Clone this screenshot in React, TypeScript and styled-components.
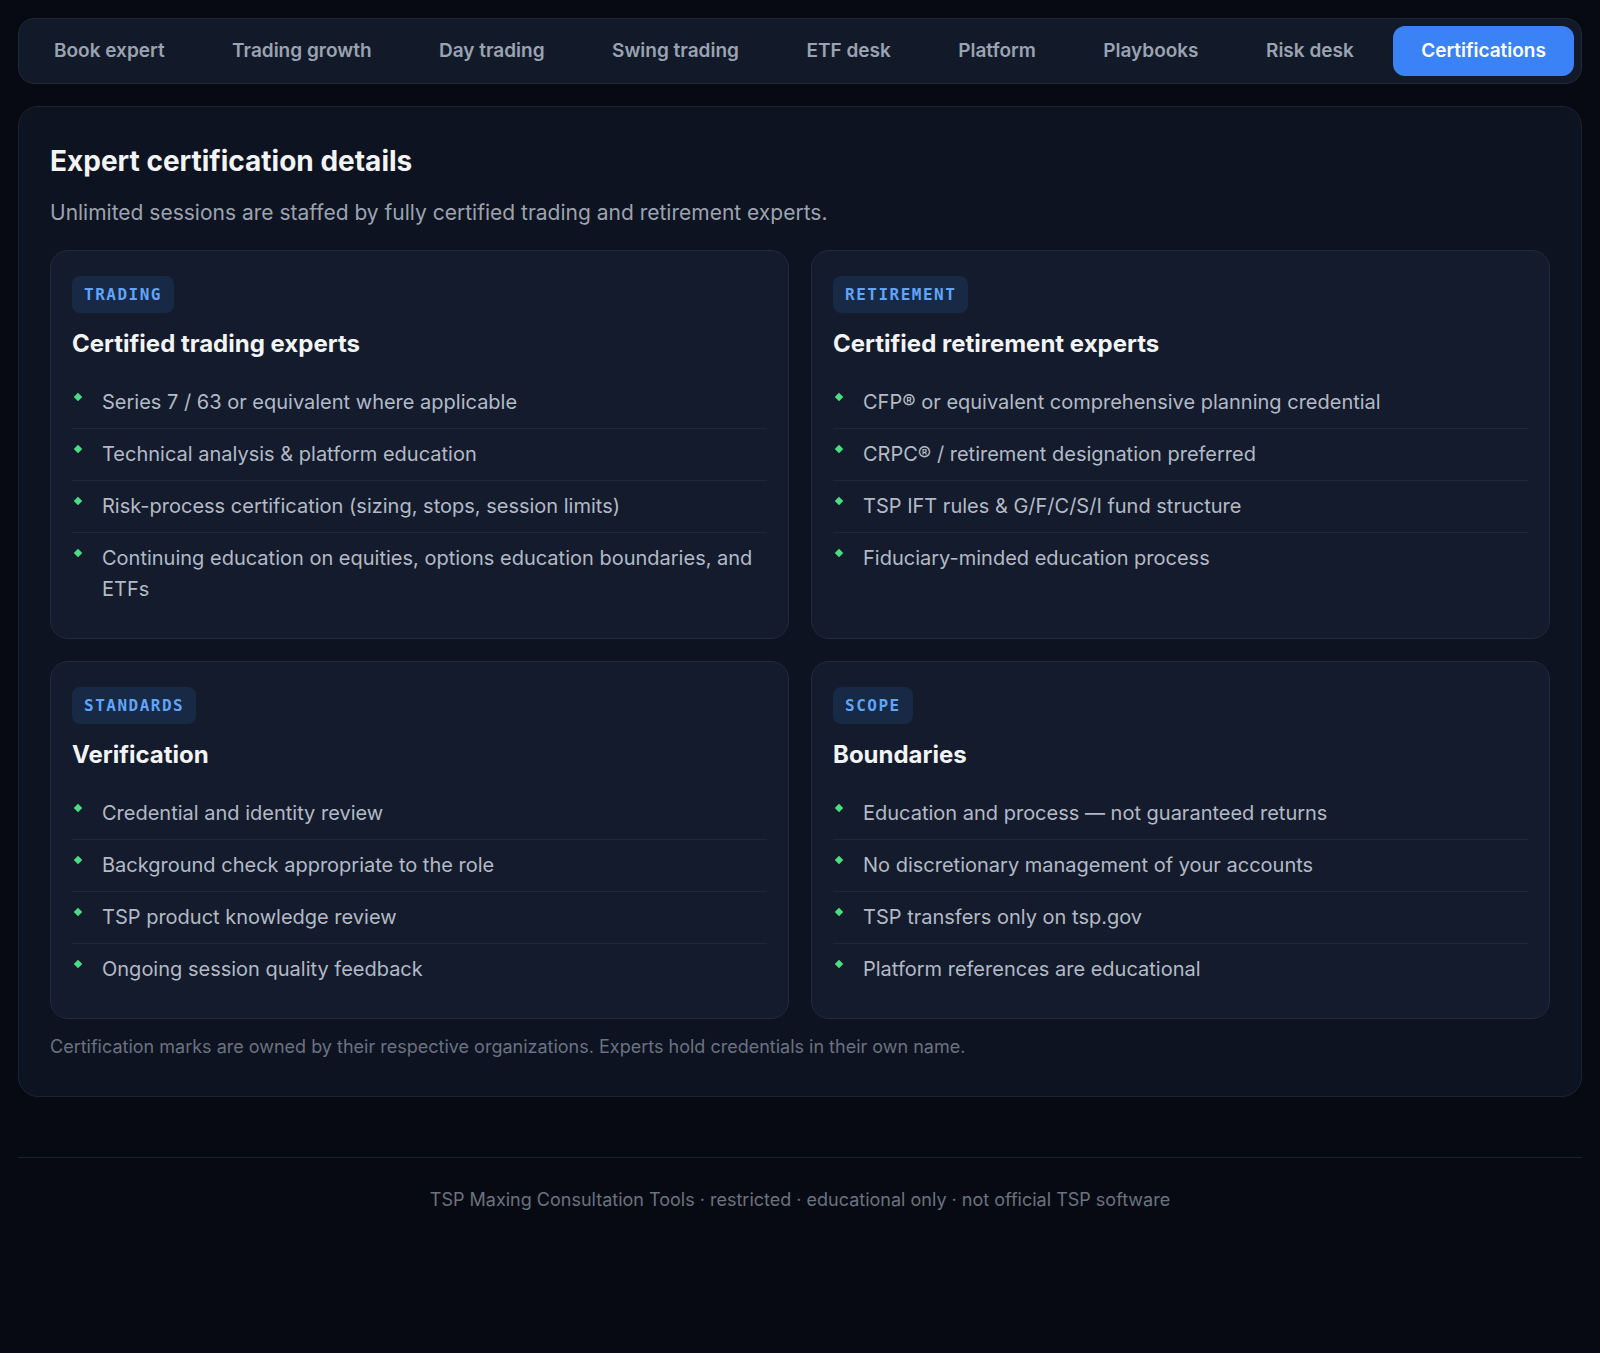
import React, { useState } from "react";
import styled, { createGlobalStyle } from "styled-components";

const tabs = [
  "Book expert",
  "Trading growth",
  "Day trading",
  "Swing trading",
  "ETF desk",
  "Platform",
  "Playbooks",
  "Risk desk",
  "Certifications",
];

const cards = [
  {
    tag: "TRADING",
    title: "Certified trading experts",
    items: [
      "Series 7 / 63 or equivalent where applicable",
      "Technical analysis & platform education",
      "Risk-process certification (sizing, stops, session limits)",
      "Continuing education on equities, options education boundaries, and ETFs",
    ],
  },
  {
    tag: "RETIREMENT",
    title: "Certified retirement experts",
    items: [
      "CFP® or equivalent comprehensive planning credential",
      "CRPC® / retirement designation preferred",
      "TSP IFT rules & G/F/C/S/I fund structure",
      "Fiduciary-minded education process",
    ],
  },
  {
    tag: "STANDARDS",
    title: "Verification",
    items: [
      "Credential and identity review",
      "Background check appropriate to the role",
      "TSP product knowledge review",
      "Ongoing session quality feedback",
    ],
  },
  {
    tag: "SCOPE",
    title: "Boundaries",
    items: [
      "Education and process — not guaranteed returns",
      "No discretionary management of your accounts",
      "TSP transfers only on tsp.gov",
      "Platform references are educational",
    ],
  },
];

const GlobalStyle = createGlobalStyle`
  * { box-sizing: border-box; }
  html, body {
    margin: 0;
    background: #070a12;
    color: #e5e7eb;
    font-family: Inter, "Noto Sans", sans-serif;
  }
`;

const App = () => {
  const [active, setActive] = useState("Certifications");

  return (
    <>
      <GlobalStyle />
      <Page>
        <TabBar>
          {tabs.map((t) => (
            <Tab key={t} $active={t === active} onClick={() => setActive(t)}>
              {t}
            </Tab>
          ))}
        </TabBar>

        <Panel>
          <Title>Expert certification details</Title>
          <Lead>
            Unlimited sessions are staffed by fully certified trading and retirement experts.
          </Lead>

          <CardGrid>
            {cards.map((c) => (
              <Card key={c.tag}>
                <Tag>{c.tag}</Tag>
                <CardTitle>{c.title}</CardTitle>
                <List>
                  {c.items.map((i) => (
                    <Item key={i}>{i}</Item>
                  ))}
                </List>
              </Card>
            ))}
          </CardGrid>

          <Note>
            Certification marks are owned by their respective organizations. Experts hold
            credentials in their own name.
          </Note>
        </Panel>

        <Footer>
          TSP Maxing Consultation Tools · restricted · educational only · not official TSP software
        </Footer>
      </Page>
    </>
  );
};

const Page = styled.div`
  padding: 18px 18px 140px;
  display: flex;
  flex-direction: column;
  gap: 22px;
`;

const TabBar = styled.nav`
  display: flex;
  justify-content: space-between;
  align-items: center;
  padding: 7px;
  background: #121a29;
  border: 1px solid #1f2837;
  border-radius: 16px;
`;

const Tab = styled.button<{ $active?: boolean }>`
  border: none;
  cursor: pointer;
  padding: 14px 28px;
  border-radius: 12px;
  font-family: inherit;
  font-size: 19px;
  line-height: 22px;
  font-weight: 600;
  color: ${(p) => (p.$active ? "#ffffff" : "#9aa3b2")};
  background: ${(p) => (p.$active ? "#3b82f6" : "transparent")};
`;

const Panel = styled.section`
  background: #0d1321;
  border: 1px solid #1c2433;
  border-radius: 20px;
  padding: 37px 31px 37px;
`;

const Title = styled.h1`
  margin: 0;
  font-size: 28px;
  line-height: 34px;
  font-weight: 700;
  color: #f3f4f6;
`;

const Lead = styled.p`
  margin: 20px 0 22px;
  font-size: 21px;
  line-height: 30px;
  color: #9ca3af;
`;

const CardGrid = styled.div`
  display: grid;
  grid-template-columns: 1fr 1fr;
  gap: 22px;
`;

const Card = styled.div`
  background: #131b2c;
  border: 1px solid #222b3b;
  border-radius: 18px;
  padding: 25px 21px 23px;
`;

const Tag = styled.span`
  display: inline-block;
  padding: 9px 12px;
  border-radius: 8px;
  background: #172944;
  color: #60a5fa;
  font-family: "DejaVu Sans Mono", "Liberation Mono", monospace;
  font-size: 16px;
  line-height: 19px;
  font-weight: 700;
  letter-spacing: 1.5px;
`;

const CardTitle = styled.h2`
  margin: 16px 0 18px;
  font-size: 24px;
  line-height: 30px;
  font-weight: 700;
  color: #f3f4f6;
`;

const List = styled.ul`
  list-style: none;
  margin: 0;
  padding: 0;
`;

const Item = styled.li`
  position: relative;
  padding: 10px 0 10px 30px;
  font-size: 20px;
  line-height: 31px;
  color: #b3bac6;
  border-bottom: 1px solid #1f2839;

  &:last-child {
    border-bottom: none;
  }

  &::before {
    content: "";
    position: absolute;
    left: 3px;
    top: 17px;
    width: 6px;
    height: 6px;
    background: #4ade80;
    transform: rotate(45deg);
  }
`;

const Note = styled.p`
  margin: 16px 0 0;
  font-size: 18px;
  line-height: 24px;
  color: #6b7280;
`;

const Footer = styled.footer`
  margin-top: 38px;
  padding-top: 30px;
  border-top: 1px solid #1a2130;
  text-align: center;
  font-size: 18px;
  line-height: 24px;
  color: #6b7280;
`;

export default App;
